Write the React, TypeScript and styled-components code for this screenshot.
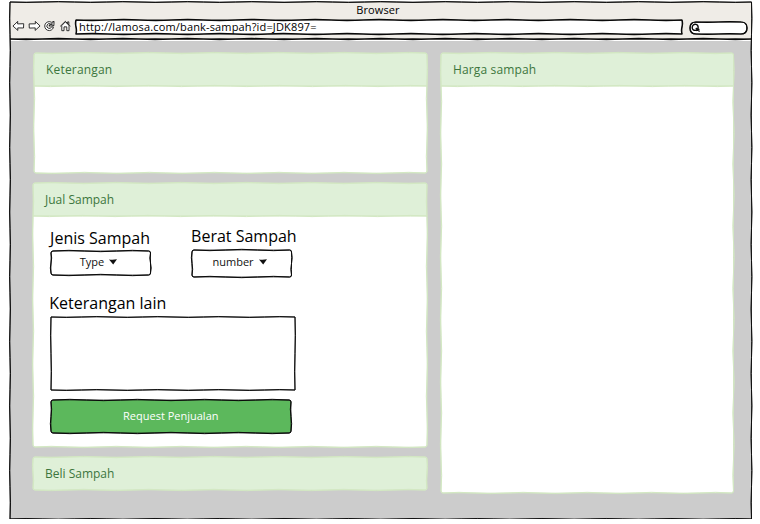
import React from "react";
import styled, { createGlobalStyle } from "styled-components";

const GlobalStyle = createGlobalStyle`
  *, *::before, *::after { box-sizing: border-box; }
  html, body { margin: 0; background: #fff; }
  body { font-family: "Open Sans", "Noto Sans", sans-serif; font-size: 11px; color: #111; overflow: hidden; }
`;

const INK = "#0a0a0a";
const LEAF = "#d3e8c3";

/* Walks along one edge, alternating the side of each shallow bend. */
const edge = (x1: number, y1: number, x2: number, y2: number, amp: number, phase: number) => {
  const length = Math.hypot(x2 - x1, y2 - y1);
  if (length < 1) return "";
  const count = Math.max(2, Math.round(length / 32));
  const nx = -(y2 - y1) / length;
  const ny = (x2 - x1) / length;
  let d = "";
  for (let i = 1; i <= count; i++) {
    const mid = (i - 0.5) / count;
    const end = i / count;
    const bend = ((i + phase) % 2 ? 1 : -1) * amp * 1.5;
    const cx = x1 + (x2 - x1) * mid + nx * bend;
    const cy = y1 + (y2 - y1) * mid + ny * bend;
    d += ` Q${cx.toFixed(2)} ${cy.toFixed(2)} ${(x1 + (x2 - x1) * end).toFixed(2)} ${(y1 + (y2 - y1) * end).toFixed(2)}`;
  }
  return d;
};

const outline = (w: number, h: number, r: number, amp: number, phase: number) =>
  `M${r} 0` +
  edge(r, 0, w - r, 0, amp, phase) +
  ` Q${w} 0 ${w} ${r}` +
  edge(w, r, w, h - r, amp, phase + 1) +
  ` Q${w} ${h} ${w - r} ${h}` +
  edge(w - r, h, r, h, amp, phase) +
  ` Q0 ${h} 0 ${h - r}` +
  edge(0, h - r, 0, r, amp, phase) +
  ` Q0 0 ${r} 0Z`;

const Strokes = styled.svg`
  position: absolute;
  inset: 0;
  overflow: visible;
  pointer-events: none;
`;

type SketchProps = { w: number; h: number; r?: number; color?: string; weight?: number; phase?: number; amp?: number };

const Sketch = ({ w, h, r = 2, color = INK, weight = 1, phase = 0, amp = 0.9 }: SketchProps) => (
  <Strokes width={w} height={h} fill="none" stroke={color} strokeWidth={weight} strokeLinejoin="round">
    <path d={outline(w, h, r, amp, phase)} />
    <path d={outline(w, h, r, amp * 0.25, phase)} />
  </Strokes>
);

const SketchRule = ({ w, color = INK, weight = 1.1 }: { w: number; color?: string; weight?: number }) => (
  <Strokes width={w} height={1} fill="none" stroke={color} strokeWidth={weight}>
    <path d={"M0 0" + edge(0, 0, w, 0, 0.8, 0)} />
    <path d={"M0 0" + edge(0, 0, w, 0, 0.2, 1)} />
  </Strokes>
);

const Window = styled.main`
  position: relative;
  width: 741.5px;
  height: 517px;
  margin: 2px 0 0 9.7px;
  display: flex;
  flex-direction: column;
  background: #ccc;
`;

const Chrome = styled.header`
  position: relative;
  height: 39px;
  background: #efece7;
  border-bottom: 1px solid #fff;
  color: #000;
`;

const Title = styled.div`
  height: 18px;
  padding-right: 5px;
  line-height: 16px;
  text-align: center;
  letter-spacing: 0.12px;
`;

const Toolbar = styled.div`
  display: flex;
  height: 14px;
  padding-left: 2px;
`;

const Icons = styled.div`
  display: flex;
  gap: 2.5px;
  width: 64.3px;
  padding-left: 0.8px;
`;

const Icon = styled.svg`
  width: 13px;
  height: 13px;
  fill: #fff;
  stroke: #222;
  stroke-width: 1;
  stroke-linejoin: round;
  overflow: visible;
`;

const Address = styled.div`
  position: relative;
  width: 606px;
  height: 14px;
  padding-left: 3px;
  background: #fff;
  line-height: 14px;
  letter-spacing: 0.15px;
  white-space: nowrap;
`;

const Search = styled.div`
  position: relative;
  width: 57px;
  height: 12px;
  margin: 1.5px 0 0 8px;
  border-radius: 6px;
  background: #fff;
`;

const Glass = styled.svg`
  display: block;
  margin: 1px 0 0 1.5px;
  overflow: visible;
`;

const ChromeEdge = styled.div`
  position: absolute;
  left: 0;
  bottom: 1px;
`;

const Page = styled.div`
  display: flex;
  align-items: flex-start;
  gap: 14px;
  padding: 11.5px 0 0 23.3px;
`;

const Column = styled.div`
  display: flex;
  flex-direction: column;
  gap: 10px;
`;

const PanelBox = styled.section<{ $w: number; $h: number; $inset?: number }>`
  position: relative;
  width: ${(p) => p.$w}px;
  height: ${(p) => p.$h}px;
  margin-left: ${(p) => p.$inset ?? 0}px;
  border-radius: 2px;
  background: #fff;
`;

const PanelHead = styled.h2<{ $spread?: number }>`
  position: relative;
  height: 33px;
  margin: 0;
  padding-left: 12px;
  background: #dff0d8;
  color: #3c763d;
  font-size: 12px;
  font-weight: 400;
  line-height: 34px;
  letter-spacing: ${(p) => p.$spread ?? 0}px;
`;

const HeadEdge = styled.div`
  position: absolute;
  left: 0;
  bottom: 0;
`;

const Form = styled.div`
  padding: 12px 0 0 17.8px;
`;

const Fields = styled.div`
  display: flex;
  gap: 41px;
  height: 65px;
`;

const Field = styled.div<{ $lift?: number }>`
  width: 100px;
  margin-top: ${(p) => -(p.$lift ?? 0)}px;
`;

const Label = styled.div<{ $nudge?: number; $h?: number }>`
  height: ${(p) => p.$h ?? 23.5}px;
  margin-left: ${(p) => -(p.$nudge ?? 0.7)}px;
  color: #000;
  font-size: 16px;
  line-height: 20px;
  white-space: nowrap;
`;

const Select = styled.div<{ $h: number }>`
  position: relative;
  display: flex;
  align-items: center;
  justify-content: center;
  gap: 5px;
  height: ${(p) => p.$h}px;
  padding-bottom: 3px;
  padding-right: 4.5px;
  color: #111;
`;

const TextArea = styled.div`
  position: relative;
  width: 244px;
  height: 73px;
`;

const Submit = styled.div`
  position: relative;
  width: 240px;
  height: 33px;
  margin-top: 9.5px;
  border-radius: 3px;
  background: #5cb85c;
  color: #fff;
  line-height: 32px;
  text-align: center;
`;

type PanelProps = {
  title: string;
  w: number;
  h: number;
  inset?: number;
  phase?: number;
  spread?: number;
  children?: React.ReactNode;
};

const Panel = ({ title, w, h, inset, phase, spread, children }: PanelProps) => (
  <PanelBox $w={w} $h={h} $inset={inset}>
    <PanelHead $spread={spread}>
      {title}
      {h > 33 && (
        <HeadEdge>
          <SketchRule w={w} color={LEAF} weight={1} />
        </HeadEdge>
      )}
    </PanelHead>
    {children}
    <Sketch w={w} h={h} color={LEAF} phase={phase} />
  </PanelBox>
);

const Caret = () => (
  <svg width="8" height="6" viewBox="0 0 8 6">
    <path d="M0 .4Q4 1 8 .2L4.2 5.4Z" fill="#111" />
  </svg>
);

export default function App() {
  return (
    <>
      <GlobalStyle />
      <Window>
        <Chrome>
          <Title>Browser</Title>
          <Toolbar>
            <Icons>
              <Icon viewBox="0 0 14 14">
                <path d="M1 6.5L6.2 1.5L6 4.2L12.6 4L12.4 8.6L6.2 8.5L6.3 11.2Z" />
              </Icon>
              <Icon viewBox="0 0 14 14">
                <path d="M13 6.4L7.8 1.5L8 4.1L1.2 4.2L1.4 8.7L7.8 8.5L7.7 11.2Z" />
              </Icon>
              <Icon viewBox="0 0 14 14">
                <path d="M9.2 2.5A4.8 4.8 0 1 0 11.3 7.8L9.2 7.4A2.6 2.6 0 1 1 8 4.2L6.4 6.5L11.7 6.2L11.9 1.4Z" />
                <path d="M6.6 6.3L11.4 2.2M8.2 4.3L11.6 6" />
              </Icon>
              <Icon viewBox="0 0 14 14">
                <path d="M3 6V11.5H5.4V7.4H8.4V11.5H10.8V5.8L6.8 2Z" />
                <path d="M1.3 6.8L6.8 1.5L12.3 6.6M9.3 3.6V2H10.6V5" fill="none" />
              </Icon>
            </Icons>
            <Address>
              http://lamosa.com/bank-sampah?id=JDK897=
              <Sketch w={606} h={14} r={0} amp={0.9} weight={1.1} />
            </Address>
            <Search>
              <Glass width="9" height="9" viewBox="0 0 9 9" fill="none" stroke={INK} strokeWidth="1.4">
                <path d="M1.2 4.8C1.1 2.4 2.8 .9 5 1.4C8 2.2 7.8 6.9 4.8 7.3C2.8 7.6 1.3 6.6 1.2 4.8M4.8 5L8.6 8.4M5.2 7.6L8.4 6.2" />
              </Glass>
              <Sketch w={57} h={12} r={6} amp={0.5} weight={1.2} />
            </Search>
          </Toolbar>
          <ChromeEdge>
            <SketchRule w={741.5} />
          </ChromeEdge>
        </Chrome>
        <Page>
          <Column>
            <Panel title="Keterangan" w={393} h={120} inset={1} spread={0.18} />
            <Panel title="Jual Sampah" w={394} h={264} phase={1}>
              <Form>
                <Fields>
                  <Field>
                    <Label>Jenis Sampah</Label>
                    <Select $h={24}>
                      Type <Caret />
                      <Sketch w={99.5} h={24} phase={1} />
                    </Select>
                  </Field>
                  <Field $lift={1.5}>
                    <Label>Berat Sampah</Label>
                    <Select $h={27}>
                      number <Caret />
                      <Sketch w={99.5} h={27} />
                    </Select>
                  </Field>
                </Fields>
                <Label $nudge={1.5} $h={24.5}>Keterangan lain</Label>
                <TextArea>
                  <Sketch w={244} h={73} r={0} amp={0.7} weight={0.9} />
                </TextArea>
                <Submit>
                  Request Penjualan
                  <Sketch w={240} h={33} phase={1} />
                </Submit>
              </Form>
            </Panel>
            <Panel title="Beli Sampah" w={394} h={33} />
          </Column>
          <Panel title="Harga sampah" w={292.5} h={440} spread={0.15} />
        </Page>
        <Sketch w={741.5} h={517} r={0} weight={0.9} amp={0.7} />
      </Window>
    </>
  );
}
